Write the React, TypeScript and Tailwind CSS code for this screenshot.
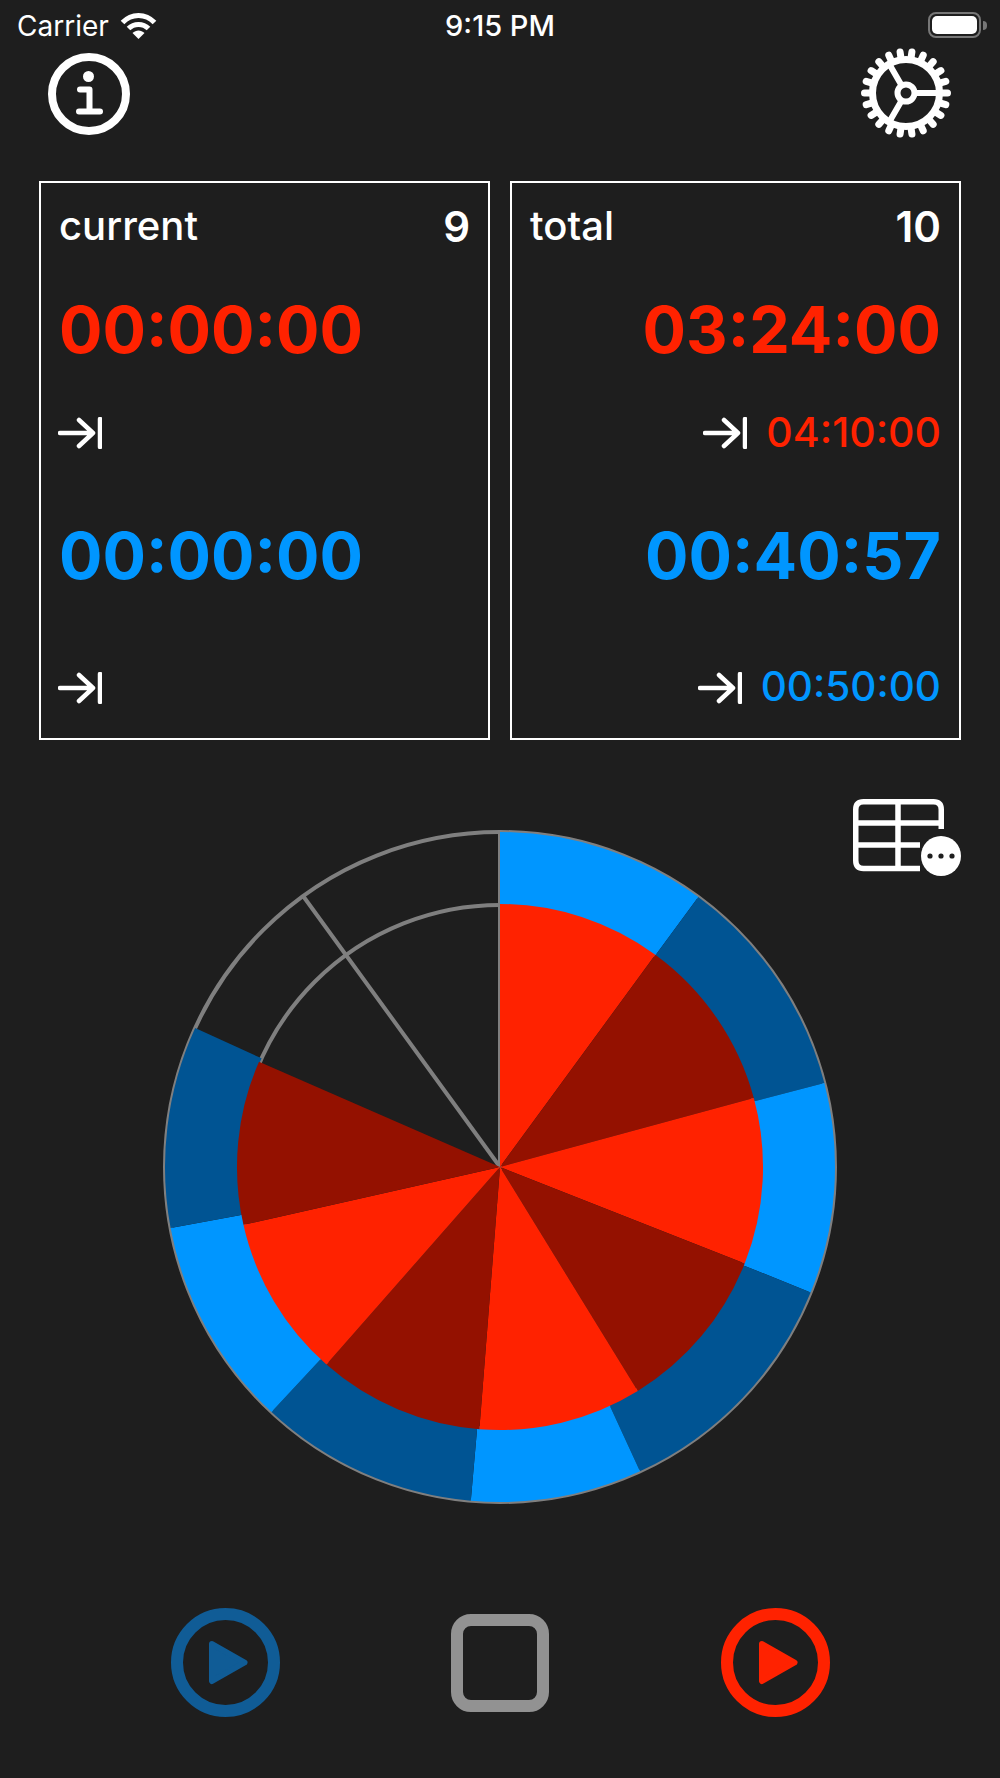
const CX = 340;
const CY = 340;
const OUTER = 335;
const INNER = 262;

const pt = (r: number, deg: number) => {
  const a = ((deg - 90) * Math.PI) / 180;
  return `${(CX + r * Math.cos(a)).toFixed(2)} ${(CY + r * Math.sin(a)).toFixed(2)}`;
};
const sector = (r: number, from: number, to: number) =>
  `M${CX} ${CY} L${pt(r, from)} A${r} ${r} 0 0 1 ${pt(r, to)} Z`;
const band = (r0: number, r1: number, from: number, to: number) =>
  `M${pt(r0, from)} L${pt(r1, from)} A${r1} ${r1} 0 0 1 ${pt(r1, to)} L${pt(r0, to)} A${r0} ${r0} 0 0 0 ${pt(r0, from)} Z`;

const blueStops = [0, 36.3, 75.5, 112, 155.3, 185, 223, 259.5, 294.5];
const redStops = [0, 36.2, 74.8, 111.5, 148.4, 184.5, 221.3, 257.3, 293.6];

function Wheel() {
  return (
    <svg width="680" height="680" viewBox="0 0 680 680" className="block">
      <g fill="none" stroke="#7f7f7f" strokeWidth="4">
        <circle cx={CX} cy={CY} r={OUTER} />
        <circle cx={CX} cy={CY} r={INNER} />
        <path d={`M${pt(OUTER, 324)} L${CX} ${CY} L${CX} ${CY - OUTER}`} />
      </g>
      {blueStops.slice(0, -1).map((s, i) => (
        <path key={s} d={band(INNER, OUTER, s, blueStops[i + 1])} fill={i % 2 ? "#005493" : "#0096ff"} />
      ))}
      {redStops.slice(0, -1).map((s, i) => (
        <path key={s} d={sector(INNER + 1, s, redStops[i + 1])} fill={i % 2 ? "#941100" : "#ff2200"} />
      ))}
    </svg>
  );
}

function ArrowEnd() {
  return (
    <svg width="44" height="32" viewBox="0 0 44 32" fill="none" stroke="white" strokeWidth="4.5" strokeLinecap="round" strokeLinejoin="round" className="-ml-px shrink-0">
      <path d="M2 16H35M21 3L35 16L21 29" />
      <path d="M42 2V30" />
    </svg>
  );
}

function InfoIcon() {
  return (
    <svg width="82" height="82" viewBox="0 0 82 82" fill="none" className="mt-[2px]">
      <circle cx="41" cy="41" r="37" stroke="white" strokeWidth="8" />
      <circle cx="40.5" cy="23.5" r="5.5" fill="white" />
      <path d="M32 36.5H41.5V58.5M31 58.5H52" stroke="white" strokeWidth="6" strokeLinecap="round" strokeLinejoin="round" />
    </svg>
  );
}

function GearIcon() {
  const teeth = Array.from({ length: 22 }, (_, i) => (i * 360) / 22);
  return (
    <svg width="90" height="90" viewBox="0 0 90 90" fill="none" stroke="white">
      {teeth.map((d) => (
        <line key={d} x1="45" y1="9" x2="45" y2="3.5" strokeWidth="7" strokeLinecap="round" transform={`rotate(${d + 8.18} 45 45)`} />
      ))}
      <circle cx="45" cy="45" r="33.5" strokeWidth="7" />
      <circle cx="45" cy="45" r="8.5" strokeWidth="6" />
      <path d="M54 45H78M40.5 37.2L28.5 16.4M40.5 52.8L28.5 73.6" strokeWidth="6" />
    </svg>
  );
}

function TableIcon() {
  return (
    <svg width="108" height="78" viewBox="0 0 108 78" fill="none" className="block">
      <path d="M67 69.5H10.5Q2.75 69.5 2.75 61.5V10.5Q2.75 2.75 10.5 2.75H80.5Q88.25 2.75 88.25 10.5V30" stroke="white" strokeWidth="5.5" />
      <path d="M2.75 24H88M2.75 46H67M45 2.75V69.5" stroke="white" strokeWidth="5.5" />
      <circle cx="88" cy="57" r="20" fill="white" />
      <circle cx="77" cy="57" r="2.6" fill="#1e1e1e" />
      <circle cx="88" cy="57" r="2.6" fill="#1e1e1e" />
      <circle cx="99" cy="57" r="2.6" fill="#1e1e1e" />
    </svg>
  );
}

function PlayButton({ color }: { color: string }) {
  return (
    <svg width="109" height="109" viewBox="0 0 109 109" fill="none">
      <circle cx="54.5" cy="54.5" r="48.5" stroke={color} strokeWidth="12" />
      <path d="M41 36L73.5 54.5L41 73Z" fill={color} stroke={color} strokeWidth="6" strokeLinejoin="round" />
    </svg>
  );
}

function WifiIcon() {
  return (
    <svg width="37" height="27" viewBox="0 0 37 27" fill="none" stroke="white" strokeWidth="5">
      <path d="M2.5 10.5C11.5 1 25.5 1 34.5 10.5" />
      <path d="M8.5 16.5C14 11 23 11 28.5 16.5" />
      <path d="M12.5 21L18.5 27L24.5 21C21 17.5 16 17.5 12.5 21Z" fill="white" stroke="none" />
    </svg>
  );
}

function Card({ children }: { children: React.ReactNode }) {
  return <div className="flex h-[559px] w-[451px] flex-col border-2 border-white px-[18px]">{children}</div>;
}

export default function App() {
  return (
    <div className="flex h-[1778px] w-[1000px] flex-col overflow-hidden bg-[#1e1e1e] font-['Inter',sans-serif] text-white">
      {/* status bar */}
      <div className="relative flex h-[48px] items-center pl-[17px] pr-[13px] pt-[2px] text-[28px]">
        <span className="w-[103px] pt-[2px]">Carrier</span>
        <WifiIcon />
        <span className="flex-1 pr-[85px] pt-[2px] text-center text-[29px] font-medium">9:15 PM</span>
        <div className="flex items-center">
          <div className="h-[26px] w-[53px] rounded-[8px] border-2 border-[#777777] p-[2px]">
            <div className="h-full w-full rounded-[5px] bg-white" />
          </div>
          <div className="ml-[2px] h-[9px] w-[4px] rounded-r-full bg-[#777777]" />
        </div>
      </div>

      {/* top buttons */}
      <div className="flex h-[90px] items-center justify-between pl-[48px] pr-[49px]">
        <InfoIcon />
        <GearIcon />
      </div>

      {/* stats */}
      <div className="mt-[43px] flex justify-between px-[39px]">
        <Card>
          <div className="flex h-[86px] shrink-0 items-center justify-between text-[40px] font-medium">
            <span>current</span>
            <span className="text-[42px] font-semibold">9</span>
          </div>
          <div className="flex h-[122px] shrink-0 items-center text-[64.5px] font-bold text-[#ff2200]">00:00:00</div>
          <div className="flex h-[84px] shrink-0 items-center"><ArrowEnd /></div>
          <div className="flex h-[162px] shrink-0 items-center text-[64.5px] font-bold text-[#0096ff]">00:00:00</div>
          <div className="flex h-[101px] shrink-0 items-center"><ArrowEnd /></div>
        </Card>
        <Card>
          <div className="flex h-[86px] shrink-0 items-center justify-between text-[40px] font-medium">
            <span>total</span>
            <span className="text-[42px] font-semibold">10</span>
          </div>
          <div className="flex h-[122px] shrink-0 items-center justify-end text-[64.5px] font-bold text-[#ff2200]">03:24:00</div>
          <div className="flex h-[84px] shrink-0 items-center justify-end gap-[19px] text-[41px] font-medium text-[#ff2200]">
            <ArrowEnd />
            <span>04:10:00</span>
          </div>
          <div className="flex h-[162px] shrink-0 items-center justify-end text-[64.5px] font-bold text-[#0096ff]">00:40:57</div>
          <div className="flex h-[101px] shrink-0 items-center justify-end gap-[19px] text-[40.5px] font-medium text-[#0096ff]">
            <ArrowEnd />
            <span>00:50:00</span>
          </div>
        </Card>
      </div>

      {/* wheel */}
      <div className="relative mt-[87px] flex justify-center">
        <Wheel />
        <div className="absolute right-[39px] top-[-28px]">
          <TableIcon />
        </div>
      </div>

      {/* transport */}
      <div className="mt-[101px] flex items-center justify-between pl-[171px] pr-[170px]">
        <PlayButton color="#105c96" />
        <div className="mr-[2px] h-[98px] w-[98px] rounded-[20px] border-[12px] border-[#929292]" />
        <PlayButton color="#ff2200" />
      </div>
    </div>
  );
}
